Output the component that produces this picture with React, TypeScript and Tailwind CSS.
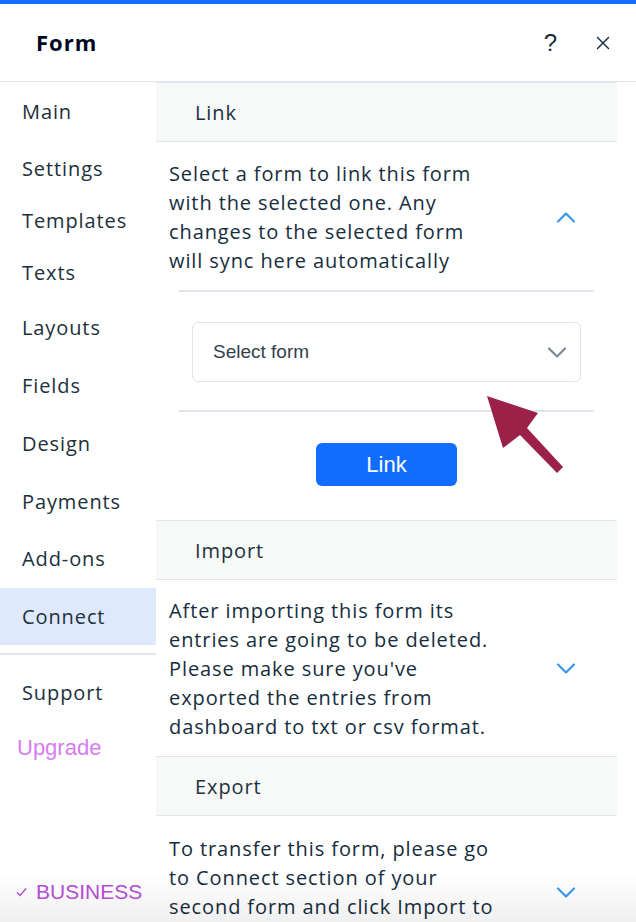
import { X } from "lucide-react";

const NAV = [
  { label: "Main", h: "h-[58px]" },
  { label: "Settings", h: "h-[56px]" },
  { label: "Templates", h: "h-[50px]" },
  { label: "Texts", h: "h-[53px]" },
  { label: "Layouts", h: "h-[58px]" },
  { label: "Fields", h: "h-[58px]" },
  { label: "Design", h: "h-[58px]" },
  { label: "Payments", h: "h-[57px]" },
  { label: "Add-ons", h: "h-[58px]" },
];

const body = "font-['Open_Sans',sans-serif] tracking-[0.9px]";
const helv = "font-['Liberation_Sans',Arial,sans-serif] tracking-normal";

function Chevron({ up, color = "#3899ec" }: { up?: boolean; color?: string }) {
  return (
    <svg width="20" height="11" viewBox="0 0 20 11" fill="none" stroke={color} strokeWidth="2.2" strokeLinecap="round" strokeLinejoin="round">
      <path d={up ? "M2 9.5l8-8 8 8" : "M2 1.5l8 8 8-8"} />
    </svg>
  );
}

function SectionHeader({ title }: { title: string }) {
  return (
    <div className="h-[60px] bg-[#f7f8f8] border-y border-[#dfe5eb] flex items-center pl-[39px] pt-[1px] text-[20px] text-[#20303c]">
      {title}
    </div>
  );
}

function Blurb({ text, open, pt }: { text: string; open?: boolean; pt: string }) {
  return (
    <div className={`flex items-center pl-[13px] pr-[41px] ${pt}`}>
      <p className="w-[332px] text-[20px] leading-[29px] text-[#162d3d]">{text}</p>
      <div className="ml-auto">
        <Chevron up={open} />
      </div>
    </div>
  );
}

export default function App() {
  return (
    <div className={`relative w-[636px] h-[922px] overflow-hidden bg-white ${body}`}>
      <div className="h-[4px] bg-[#116dff]" />
      <div className="h-[78px] border-b border-[#dfe5eb] flex items-center pl-[36px] pr-[22px]">
        <h1 className="text-[22px] font-bold text-[#000624] tracking-[1px]">Form</h1>
        <div className="ml-auto flex items-center gap-[35px] text-[#162d3d]">
          <span className={`text-[24px] font-light ${helv}`}>?</span>
          <X size={22} strokeWidth={1.5} />
        </div>
      </div>

      <div className="flex">
        <nav className="w-[156px] shrink-0 flex flex-col text-[20px] text-[#20303c]">
          {NAV.map((n, i) => (
            <div key={n.label} className={`${n.h} flex items-center pl-[22px] ${i < 2 ? "pt-[2px]" : ""}`}>{n.label}</div>
          ))}
          <div className="h-[57px] flex items-center pl-[22px] bg-[#dfe9fd]">Connect</div>
          <div className="mt-[8px] h-[2px] bg-[#dfe5eb]" />
          <div className="h-[74px] flex items-center pl-[22px] pt-[2px]">Support</div>
          <div className={`pl-[17px] pt-[2px] text-[22px] text-[#d67cf0] ${helv}`}>Upgrade</div>
        </nav>

        <main className="w-[461px] shrink-0 text-[#162d3d]">
          <SectionHeader title="Link" />
          <Blurb open pt="pt-[17px]" text="Select a form to link this form with the selected one. Any changes to the selected form will sync here automatically" />
          <div className="mx-[23px] mt-[15px] h-[2px] bg-[#dfe5eb]" />
          <div className="px-[36px] pt-[30px] pb-[28px]">
            <div className={`h-[60px] rounded-[6px] border border-[#dfe5eb] flex items-center pl-[20px] pr-[13px] text-[19px] text-[#32404e] ${helv}`}>
              Select form
              <div className="ml-auto">
                <Chevron color="#7a8a99" />
              </div>
            </div>
          </div>
          <div className="mx-[23px] h-[2px] bg-[#dfe5eb]" />
          <div className="flex justify-center pt-[31px] pb-[34px]">
            <button className={`w-[141px] h-[43px] rounded-[6px] bg-[#116dff] text-white text-[22px] ${helv}`}>Link</button>
          </div>
          <SectionHeader title="Import" />
          <Blurb pt="pt-[16px]" text="After importing this form its entries are going to be deleted. Please make sure you've exported the entries from dashboard to txt or csv format." />
          <div className="h-[15px]" />
          <SectionHeader title="Export" />
          <Blurb pt="pt-[18px]" text="To transfer this form, please go to Connect section of your second form and click Import to paste the form code." />
        </main>
      </div>

      <div className="absolute left-0 right-0 bottom-0 h-[50px] bg-gradient-to-b from-transparent to-black/[0.06]" />
      <div className={`absolute left-[15px] top-[876px] flex items-center gap-[7px] text-[#b44cd2] text-[21px] ${helv}`}>
        <svg width="14" height="12" viewBox="0 0 14 12" fill="none" stroke="#b44cd2" strokeWidth="1.4">
          <path d="M2 6.5l3 3 6-7" />
        </svg>
        BUSINESS
      </div>

      <svg className="absolute left-0 top-0 pointer-events-none" width="636" height="922">
        <polygon
          fill="#9b2149"
          points="487,396 538,413 527,428 563,467 557,473 520,435 503,448"
        />
      </svg>
    </div>
  );
}
